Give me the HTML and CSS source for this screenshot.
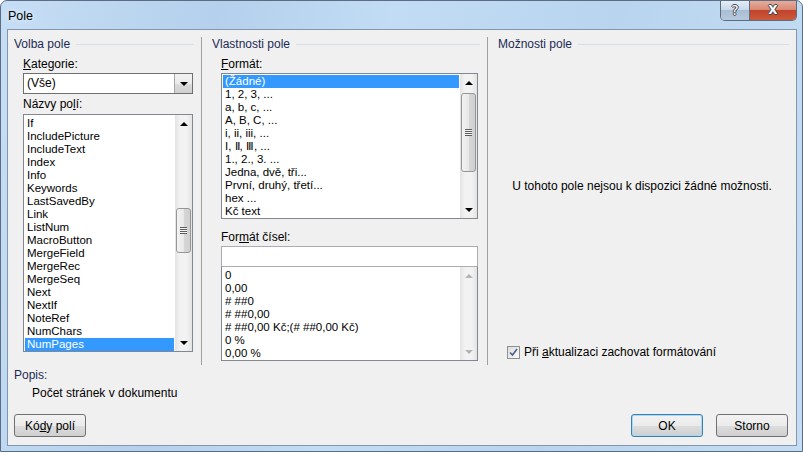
FILE: index.html
```html
<!DOCTYPE html>
<html>
<head>
    <link rel="stylesheet" href="styles.css">
</head>
<body>
    <div class="window">
        <div class="titlebar">
            <span class="title">Pole</span>
            <div class="caption-buttons">
                <div class="cap cap-help">?</div>
                <div class="cap cap-close">X</div>
            </div>
        </div>

        <div class="client">
            <div class="panes">
                <section class="pane pane-choose">
                    <div class="group-title">Volba pole</div>
                    <div class="field">
                        <div class="label"><u>K</u>ategorie:</div>
                        <div class="combo">
                            <span class="combo-value">(Vše)</span>
                            <span class="combo-button"><span class="arrow arrow-down"></span></span>
                        </div>
                        <div class="label label-gap">Názvy po<u>l</u>í:</div>
                        <div class="listbox listbox-names">
                            <div class="list-items">
                                <div class="item">If</div>
                                <div class="item">IncludePicture</div>
                                <div class="item">IncludeText</div>
                                <div class="item">Index</div>
                                <div class="item">Info</div>
                                <div class="item">Keywords</div>
                                <div class="item">LastSavedBy</div>
                                <div class="item">Link</div>
                                <div class="item">ListNum</div>
                                <div class="item">MacroButton</div>
                                <div class="item">MergeField</div>
                                <div class="item">MergeRec</div>
                                <div class="item">MergeSeq</div>
                                <div class="item">Next</div>
                                <div class="item">NextIf</div>
                                <div class="item">NoteRef</div>
                                <div class="item">NumChars</div>
                                <div class="item selected">NumPages</div>
                            </div>
                            <div class="scrollbar">
                                <div class="sb-btn"><span class="arrow arrow-up"></span></div>
                                <div class="sb-track">
                                    <div class="sb-thumb thumb-names"><span class="grip"></span></div>
                                </div>
                                <div class="sb-btn"><span class="arrow arrow-down"></span></div>
                            </div>
                        </div>
                    </div>
                </section>

                <section class="pane pane-props">
                    <div class="group-title">Vlastnosti pole</div>
                    <div class="field field-wide">
                        <div class="label"><u>F</u>ormát:</div>
                        <div class="listbox listbox-format">
                            <div class="list-items">
                                <div class="item selected">(Žádné)</div>
                                <div class="item">1, 2, 3, ...</div>
                                <div class="item">a, b, c, ...</div>
                                <div class="item">A, B, C, ...</div>
                                <div class="item">i, ii, iii, ...</div>
                                <div class="item">I, <span class="roman">Ⅱ</span>, <span class="roman">Ⅲ</span>, ...</div>
                                <div class="item">1., 2., 3. ...</div>
                                <div class="item">Jedna, dvě, tři...</div>
                                <div class="item">První, druhý, třetí...</div>
                                <div class="item">hex ...</div>
                                <div class="item">Kč text</div>
                            </div>
                            <div class="scrollbar">
                                <div class="sb-btn"><span class="arrow arrow-up"></span></div>
                                <div class="sb-track">
                                    <div class="sb-thumb thumb-format"><span class="grip"></span></div>
                                </div>
                                <div class="sb-btn"><span class="arrow arrow-down"></span></div>
                            </div>
                        </div>

                        <div class="label label-numbers">For<u>m</u>át čísel:</div>
                        <div class="textbox"></div>
                        <div class="listbox listbox-numbers">
                            <div class="list-items">
                                <div class="item">0</div>
                                <div class="item">0,00</div>
                                <div class="item"># ##0</div>
                                <div class="item"># ##0,00</div>
                                <div class="item"># ##0,00 Kč;(# ##0,00 Kč)</div>
                                <div class="item">0 %</div>
                                <div class="item">0,00 %</div>
                            </div>
                            <div class="scrollbar disabled">
                                <div class="sb-btn"><span class="arrow arrow-up"></span></div>
                                <div class="sb-track"></div>
                                <div class="sb-btn"><span class="arrow arrow-down"></span></div>
                            </div>
                        </div>
                    </div>
                </section>

                <section class="pane pane-options">
                    <div class="group-title">Možnosti pole</div>
                    <div class="no-options">U tohoto pole nejsou k dispozici žádné možnosti.</div>
                    <label class="check-row">
                        <span class="checkbox">
                            <svg width="9" height="9" viewBox="0 0 9 9">
                                <path d="M1 4.5 L3.5 7 L8 1" fill="none" stroke="#4a5f8a" stroke-width="1.6"/>
                            </svg>
                        </span>
                        <span>Při <u>a</u>ktualizaci zachovat formátování</span>
                    </label>
                </section>
            </div>

            <div class="description">
                <div class="desc-label">Popis:</div>
                <div class="desc-text">Počet stránek v dokumentu</div>
            </div>

            <div class="footer">
                <button class="btn">Kó<u>d</u>y polí</button>
                <div class="footer-right">
                    <button class="btn btn-default">OK</button>
                    <button class="btn">Storno</button>
                </div>
            </div>
        </div>
    </div>
</body>
</html>
```

FILE: styles.css
```css
body {
    margin: 0;
    width: 803px;
    height: 452px;
    overflow: hidden;
    font-family: "Liberation Sans", Arial, sans-serif;
    font-size: 12px;
    color: #000;
}
.window {
    box-sizing: border-box;
    width: 803px;
    height: 452px;
    border: 1px solid #5b6d82;
    border-radius: 7px 7px 0 0;
    padding: 0 5px 5px 6px;
    background: linear-gradient(100deg, #c6def5 0%, #b4d0ec 25%, #c2dcf5 45%, #b9d4ef 70%, #c4ddf4 100%);
    display: flex;
    flex-direction: column;
}
.titlebar {
    height: 28px;
    display: flex;
    justify-content: space-between;
    align-items: flex-start;
}
.title {
    padding: 7px 0 0 1px;
    line-height: 16px;
    font-size: 12.5px;
    text-shadow: 0 0 6px rgba(255, 255, 255, 0.9);
}
.caption-buttons {
    display: flex;
    border: 1px solid #5d6b7e;
    border-top: none;
    border-radius: 0 0 5px 5px;
    overflow: hidden;
    height: 19px;
}
.cap {
    height: 19px;
    text-align: center;
    line-height: 19px;
    font-family: "DejaVu Sans", sans-serif;
    font-weight: bold;
    font-size: 13px;
    color: #fff;
    text-shadow: -1px 0 #3b4351, 1px 0 #3b4351, 0 -1px #3b4351, 0 1px #3b4351;
}
.cap-help {
    width: 28px;
    border-right: 1px solid #5d6b7e;
    background: linear-gradient(#e4edf6 0%, #c9d8e9 45%, #a9bdd4 50%, #b6c9dd 100%);
    font-weight: normal;
    font-size: 14px;
}
.cap-close {
    width: 46px;
    background: linear-gradient(#e6ab9d 0%, #d98a73 45%, #c2432b 50%, #ca5a3c 100%);
    font-size: 12px;
}
.client {
    flex: 1;
    border: 1px solid #8496ab;
    background: #f0f0f0;
    display: flex;
    flex-direction: column;
}
.panes {
    margin-top: 7px;
    height: 328px;
    display: grid;
    grid-template-columns: 193px 286px 1fr;
}
.pane {
    display: flex;
    flex-direction: column;
}
.pane-props,
.pane-options {
    border-left: 1px solid #a0a0a0;
    padding-left: 10px;
}
.pane-choose {
    padding-left: 6px;
}
.group-title {
    display: flex;
    align-items: center;
    gap: 6px;
    line-height: 14px;
    color: #1c2b54;
    margin-right: 7px;
}
.group-title::after {
    content: "";
    flex: 1;
    height: 1px;
    background: #d5dfe5;
}
.field {
    margin-left: 9px;
    width: 170px;
}
.field-wide {
    width: 257px;
}
.label {
    margin-top: 6px;
    line-height: 15px;
}
.label-gap {
    margin-top: 3px;
}
.label-numbers {
    margin-top: 11px;
}
.combo {
    box-sizing: border-box;
    margin-top: 1px;
    height: 21px;
    border: 1px solid #707070;
    background: #fff;
    display: flex;
}
.combo-value {
    flex: 1;
    padding-left: 3px;
    line-height: 19px;
}
.combo-button {
    width: 17px;
    border-left: 1px solid #a6a6a6;
    background: linear-gradient(#f2f2f2 0%, #ebebeb 50%, #dddddd 51%, #cfcfcf 100%);
    display: flex;
    justify-content: center;
    align-items: center;
}
.arrow {
    width: 0;
    height: 0;
    border-left: 4px solid transparent;
    border-right: 4px solid transparent;
}
.arrow-down {
    border-top: 4px solid #000;
}
.arrow-up {
    border-bottom: 4px solid #000;
}
.listbox {
    box-sizing: border-box;
    border: 1px solid #828790;
    background: #fff;
    display: flex;
    overflow: hidden;
}
.listbox-names {
    margin-top: 2px;
    height: 238px;
}
.listbox-format {
    margin-top: 1px;
    height: 146px;
}
.listbox-numbers {
    height: 95px;
    border-top-color: #abadb3;
}
.list-items {
    flex: 1;
    padding: 2px 1px 0 1px;
    overflow: hidden;
}
.listbox-format .list-items {
    padding-top: 1px;
}
.item {
    height: 13px;
    line-height: 13px;
    font-size: 11.5px;
    padding-left: 2px;
    white-space: nowrap;
}
.item.selected {
    background: #3399ff;
    color: #fff;
}
.roman {
    font-family: "Liberation Serif", serif;
    font-size: 11px;
}
.textbox {
    box-sizing: border-box;
    height: 20px;
    margin-top: 1px;
    border: 1px solid #abadb3;
    border-bottom: none;
    background: #fff;
}
.scrollbar {
    width: 17px;
    display: flex;
    flex-direction: column;
    background: linear-gradient(90deg, #e3e3e3, #f2f2f2 30%, #f2f2f2 70%, #e3e3e3);
}
.sb-btn {
    height: 17px;
    display: flex;
    justify-content: center;
    align-items: center;
}
.sb-track {
    flex: 1;
}
.sb-thumb {
    box-sizing: border-box;
    margin: 0 1px;
    border: 1px solid #969696;
    border-radius: 3px;
    background: linear-gradient(90deg, #f3f3f3, #e8e8e8 50%, #d6d6d6 51%, #d0d0d0);
    display: flex;
    justify-content: center;
    align-items: center;
}
.thumb-names {
    margin-top: 76px;
    height: 45px;
}
.thumb-format {
    margin-top: 2px;
    height: 79px;
}
.grip {
    width: 7px;
    height: 7px;
    background: repeating-linear-gradient(#5c5c5c 0 1px, #f4f4f4 1px 2px);
}
.scrollbar.disabled .arrow-up {
    border-bottom-color: #b4b4b4;
}
.scrollbar.disabled .arrow-down {
    border-top-color: #b4b4b4;
}
.pane-options {
    padding-left: 0;
}
.pane-options .group-title {
    padding-left: 10px;
}
.no-options {
    margin-top: 128px;
    line-height: 15px;
    text-align: center;
}
.check-row {
    margin-top: 151px;
    padding-left: 19px;
    display: flex;
    align-items: center;
    gap: 4px;
    line-height: 15px;
}
.checkbox {
    box-sizing: border-box;
    width: 13px;
    height: 13px;
    border: 1px solid #8e8f8f;
    background: linear-gradient(135deg, #dcdcdc, #fbfbfb);
    display: flex;
    justify-content: center;
    align-items: center;
}
.description {
    margin-top: 3px;
    padding-left: 6px;
    line-height: 15px;
}
.desc-label {
    color: #1c2b54;
}
.desc-text {
    margin-top: 3px;
    padding-left: 18px;
}
.footer {
    margin-top: 13px;
    padding: 0 8px 0 6px;
    display: flex;
    justify-content: space-between;
}
.footer-right {
    display: flex;
    gap: 13px;
}
.btn {
    box-sizing: border-box;
    width: 72px;
    height: 23px;
    padding: 0;
    border: 1px solid #707070;
    border-radius: 3px;
    background: linear-gradient(#f2f2f2 0%, #ebebeb 50%, #dddddd 51%, #cfcfcf 100%);
    font-family: inherit;
    font-size: 12px;
    color: #000;
}
.btn-default {
    border-color: #3c7fb1;
    box-shadow: inset 0 0 0 1px #a7d8f4;
}
```
